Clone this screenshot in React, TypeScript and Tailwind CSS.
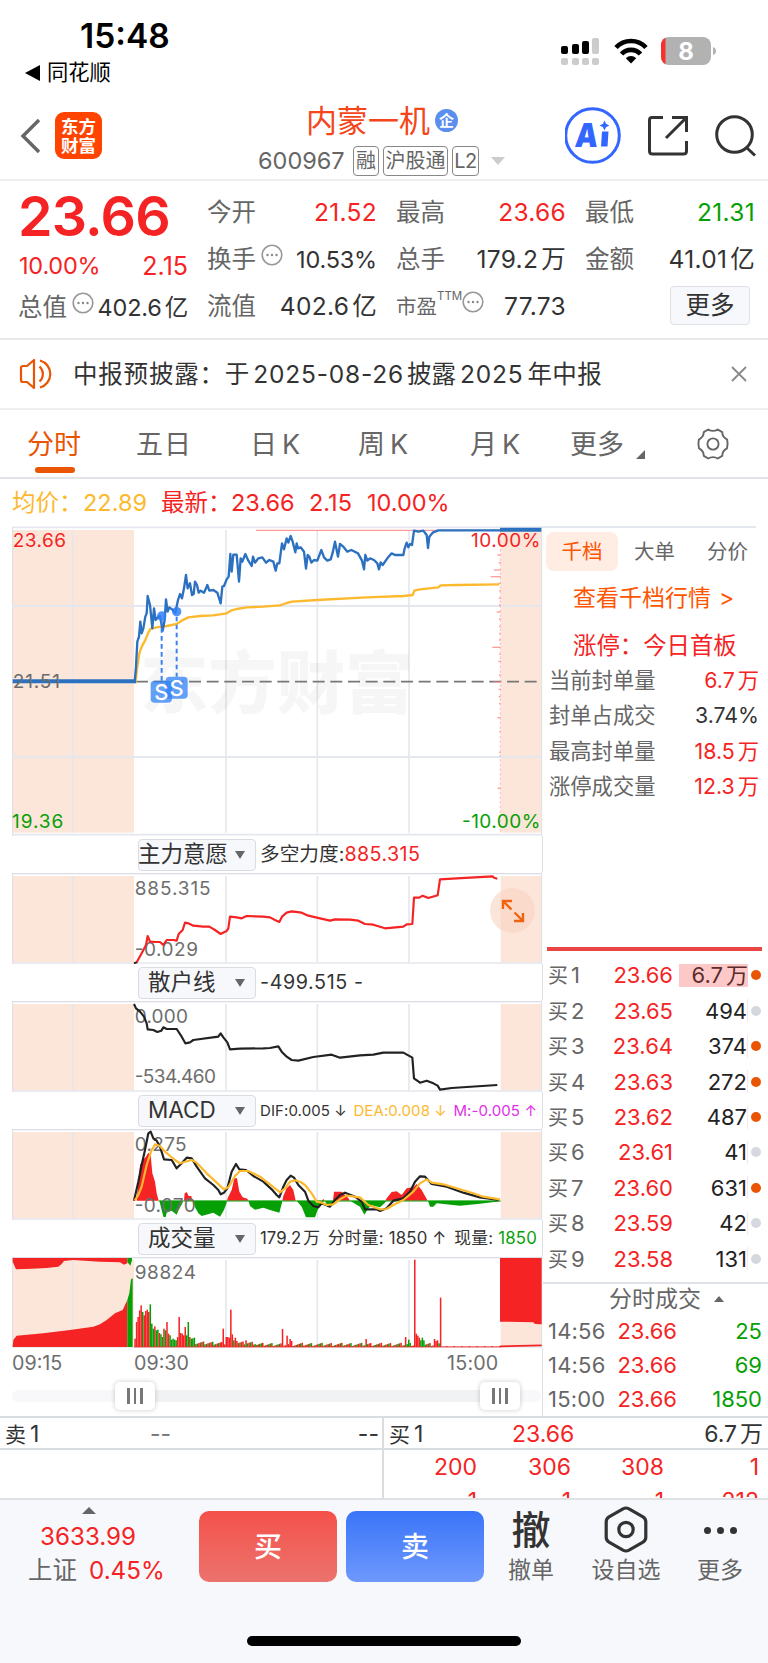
import type { ReactNode } from "react";

const RED = "#f52323";
const GREEN = "#06a006";
const PEACH = "#fce6da";
const GRID = "#e4e7ee";

type Bid = { level: number; price: string; qty: string; hot: boolean };

const bids: Bid[] = [
  { level: 1, price: "23.66", qty: "6.7万", hot: true },
  { level: 2, price: "23.65", qty: "494", hot: false },
  { level: 3, price: "23.64", qty: "374", hot: true },
  { level: 4, price: "23.63", qty: "272", hot: true },
  { level: 5, price: "23.62", qty: "487", hot: true },
  { level: 6, price: "23.61", qty: "41", hot: false },
  { level: 7, price: "23.60", qty: "631", hot: true },
  { level: 8, price: "23.59", qty: "42", hot: false },
  { level: 9, price: "23.58", qty: "131", hot: false },
];

const sealStats = [
  { label: "当前封单量", value: "6.7万", red: true },
  { label: "封单占成交", value: "3.74%", red: false },
  { label: "最高封单量", value: "18.5万", red: true },
  { label: "涨停成交量", value: "12.3万", red: true },
];

const trades = [
  { time: "14:56", price: "23.66", qty: "25" },
  { time: "14:56", price: "23.66", qty: "69" },
  { time: "15:00", price: "23.66", qty: "1850" },
];

// chart series, drawn in a 1629-unit wide space (3 units per pixel)
const pricePath =
  "404,488 408,440 412,365 417,350 421,305 425,340 430,325 436,290 440,280 443,228 450,255 457,325 462,265 467,300 474,292 480,288 488,332 494,300 498,238 503,275 508,262 516,268 526,278 534,240 540,222 546,235 552,205 558,165 563,205 570,190 576,225 581,222 585,185 591,195 596,218 602,212 612,218 618,205 622,195 628,212 640,210 652,218 662,250 667,200 672,198 680,178 686,170 691,102 695,155 700,104 710,104 717,185 722,115 727,125 736,102 745,122 755,138 759,110 765,128 775,115 787,112 798,128 808,120 820,125 827,152 832,130 838,130 846,70 852,88 860,55 865,68 872,48 878,65 886,97 890,70 894,85 902,82 912,95 918,146 923,105 928,110 934,128 942,120 952,122 964,90 972,112 982,122 992,118 998,98 1005,65 1014,110 1020,72 1030,80 1042,95 1054,90 1074,100 1086,122 1092,148 1096,105 1102,122 1110,115 1122,120 1132,130 1137,148 1142,127 1148,135 1162,115 1175,100 1185,105 1210,105 1214,85 1220,68 1225,82 1230,72 1236,75 1242,32 1255,35 1270,32 1280,45 1284,84 1288,50 1298,38 1315,31 1500,31";
const avgPath =
  "406,490 412,440 418,400 425,380 435,362 445,338 452,326 470,322 500,318 530,312 545,302 565,292 600,288 640,286 680,280 692,272 710,267 740,262 790,260 840,256 860,249 876,245 952,240 1100,232 1210,228 1238,225 1243,212 1260,208 1315,202 1322,196 1370,195 1498,193";
const powerPath =
  "410,397 425,370 438,345 443,318 450,335 465,336 480,336 490,345 500,330 520,330 530,332 536,312 548,300 555,278 565,280 580,287 610,290 628,290 645,300 662,312 672,307 680,303 685,295 690,260 710,262 725,265 740,258 790,260 810,262 825,270 838,276 846,260 860,248 875,244 905,248 925,257 960,265 990,272 1005,268 1050,269 1075,272 1095,282 1120,284 1155,295 1210,290 1220,283 1237,282 1242,203 1258,203 1268,197 1285,204 1313,196 1320,148 1370,145 1478,139 1482,143 1492,146";
const retailPath =
  "402,522 408,535 420,545 432,560 440,580 443,598 460,600 472,606 484,602 490,592 500,597 530,597 545,620 556,640 570,637 580,630 655,620 662,610 670,622 682,637 690,658 720,656 790,655 810,654 835,649 845,665 860,680 875,690 895,692 940,681 995,674 1020,683 1080,676 1120,674 1150,668 1210,668 1237,683 1242,745 1260,758 1280,752 1300,760 1313,767 1320,779 1355,774 1492,765";
const difPath =
  "402,272 415,215 425,165 435,120 445,70 452,65 460,85 470,92 480,110 492,148 515,150 530,175 545,160 560,143 575,145 590,170 615,205 640,225 655,240 662,253 672,248 682,235 695,185 708,162 718,178 738,180 760,198 790,215 815,238 830,255 838,262 850,230 860,210 872,197 882,203 895,225 915,245 925,272 940,288 955,292 965,280 990,290 1005,270 1020,255 1035,248 1065,260 1085,275 1095,298 1130,298 1140,303 1160,295 1180,272 1210,265 1230,245 1245,215 1260,199 1275,200 1295,222 1340,230 1390,248 1440,262 1496,270";
const deaPath =
  "404,272 415,255 425,230 440,165 455,120 465,103 480,108 495,125 525,150 540,160 575,150 590,158 620,190 650,218 672,238 685,232 705,198 720,183 745,183 780,200 810,223 840,247 855,235 870,215 885,211 902,216 915,225 935,250 950,275 965,278 980,285 1000,283 1020,268 1040,257 1080,262 1105,285 1140,298 1160,297 1180,285 1210,270 1240,245 1260,220 1280,208 1295,218 1330,223 1370,235 1420,250 1450,260 1500,268";
const macdUp = [
  "410,272 415,215 420,165 428,150 437,142 445,128 452,135 457,190 465,215 470,250 476,272",
  "552,272 554,250 560,246 566,258 574,258 576,272",
  "681,272 683,264 695,240 703,205 711,205 718,245 728,262 742,266 745,272",
  "847,272 850,258 860,235 870,225 880,240 887,272",
  "965,272 970,267 974,272",
  "999,272 1002,245 1025,245 1045,265 1050,272",
  "1156,272 1160,265 1175,246 1190,244 1205,255 1220,235 1240,232 1250,222 1265,240 1283,272",
];
const macdDown = [
  "478,272 485,300 490,320 497,322 500,308 515,302 530,314 536,300 548,278 548,272",
  "578,272 585,292 595,310 605,318 640,308 660,320 672,300 680,278 680,272",
  "745,272 750,288 765,299 790,293 810,300 838,308 846,278 846,272",
  "890,272 905,290 918,322 945,322 955,295 962,285 972,272",
  "975,272 982,288 996,288 999,272",
  "1050,272 1060,278 1080,290 1093,314 1105,295 1115,286 1140,292 1155,278 1158,272",
  "1284,272 1290,290 1300,290 1310,280 1380,287 1440,281 1500,274 1500,272",
];

// opening minutes of the volume histogram: height + direction
const openVolume =
  "25r 75r 90r 110r 125r 105g 95r 108r 112r 105r 128g 70g 55g 62r 50g 52g 42r 38g 30g 55r 50g 75r 40r 35g 22g 25g 22g 20g 30r 90r 42r 40r 35r 60r 35g 75g 30r 25g 26g 28g".split(" ");
const spikes: Record<number, string> = {
  58: "55r", 60: "30r", 61: "30r", 62: "28r", 63: "112r", 64: "38r", 65: "20g", 66: "28r", 67: "18r",
  73: "20r", 97: "54r", 100: "34r", 102: "24r", 103: "18r", 152: "24r", 178: "30r", 180: "22g", 184: "262r", 185: "40r",
  186: "34r", 187: "28r", 188: "20g", 189: "28g", 190: "20g", 197: "24r", 198: "18r", 199: "20r", 201: "148r",
};

const volumeBars = Array.from({ length: 241 }, (_, i) => {
  const known = openVolume[i] ?? spikes[i];
  if (known) return { h: parseInt(known), up: known.endsWith("r") };
  if (i > 201) return { h: 1 + (i % 5 === 0 ? 2 : 0), up: true };
  const noise = (i * 7919) % 13;
  const base = i < 80 ? 7 : 3;
  return { h: base + noise * 0.8, up: (i * 31) % 7 < 4 };
});

// a figure with its unit (万 / 亿) set slightly apart
function Num({ children }: { children: string }) {
  const unit = /[万亿]$/.test(children) ? children.slice(-1) : "";
  if (!unit) return <>{children}</>;
  return (
    <>
      {children.slice(0, -1)}
      <span className="ml-[3px]">{unit}</span>
    </>
  );
}

function ArrowDown({ className = "" }: { className?: string }) {
  return <span className={`inline-block border-x-[5px] border-t-[8px] border-x-transparent border-t-[#666] ${className}`} />;
}

function MoreDots() {
  return (
    <svg className="h-[22px] w-[22px] shrink-0" viewBox="0 0 22 22">
      <circle cx="11" cy="11" r="9.8" fill="none" stroke="#999" strokeWidth="1.6" />
      <circle cx="6.5" cy="11" r="1.2" fill="#888" />
      <circle cx="11" cy="11" r="1.2" fill="#888" />
      <circle cx="15.5" cy="11" r="1.2" fill="#888" />
    </svg>
  );
}

function StatusBar() {
  return (
    <div className="flex h-[92px] justify-between text-black">
      <div className="pt-[19px]">
        <div className="ml-[80px] text-[33.500px] leading-[34px] font-semibold">15:48</div>
        <div className="ml-[25px] mt-[8px] flex h-[24px] items-center text-[21.300px] leading-none">
          <span className="mr-[7px] border-y-[8px] border-r-[15px] border-y-transparent border-r-black" />
          同花顺
        </div>
      </div>
      <svg className="mr-[51px] mt-[36px] h-[30px] w-[157px]" viewBox="0 0 157 30">
        <rect x="1" y="10" width="7" height="8" rx="2" />
        <rect x="12" y="8" width="7" height="10" rx="2" />
        <rect x="22" y="5" width="7" height="13" rx="2" />
        <rect x="32" y="2" width="7" height="16" rx="2" fill="#ccc" />
        {[1, 12, 22, 32].map((x) => (
          <rect key={x} x={x} y="22" width="7" height="7" rx="2" fill="#ccc" />
        ))}
        <g fill="none" stroke="#000" strokeWidth="4.6">
          <path d="M56 11.5a20.500 20.500 0 0 1 30 0" />
          <path d="M61.500 18a13 13 0 0 1 19 0" />
        </g>
        <path d="M71 27.500 65.800 22.200a7.500 7.500 0 0 1 10.400 0z" />
        <clipPath id="battery">
          <rect x="101" y="1" width="50" height="28" rx="8" />
        </clipPath>
        <g clipPath="url(#battery)">
          <rect x="101" y="1" width="50" height="28" fill="#b2b2b2" />
          <rect x="101" y="1" width="4.500" height="28" fill="#f8302c" />
        </g>
        <path d="M153 11q3 1 3 4t-3 4z" fill="#b2b2b2" />
        <text x="126" y="23.500" textAnchor="middle" fontSize="24" fontWeight="700" fill="#fff">8</text>
      </svg>
    </div>
  );
}

function Header() {
  return (
    <div className="flex h-[89px] border-b-2 border-[#eee]">
      <div className="flex w-[258px] pt-[20px] pl-[20px]">
        <svg className="mt-[6px] h-[36px] w-[21px]" viewBox="0 0 21 36" fill="none" stroke="#666" strokeWidth="3.400">
          <path d="M19 2 3 18l16 16" />
        </svg>
        <div className="ml-[14px] flex h-[47px] w-[47px] flex-col items-center justify-center rounded-[9px] bg-[#ff4400] text-[17.500px] leading-[19px] font-bold text-white">
          <span>东方</span>
          <span>财富</span>
        </div>
      </div>
      <div className="w-[307px]">
        <div className="ml-[48px] mt-[12px] flex h-[32px] items-center">
          <span className="text-[31px] leading-none text-[#f4461a]">内蒙一机</span>
          <span className="ml-[5px] flex h-[23px] w-[23px] items-center justify-center rounded-full bg-[#5b8fee] text-[15px] leading-none font-bold text-white">
            企
          </span>
        </div>
        <div className="mt-[10px] flex h-[30px] items-center text-[#666]">
          <span className="w-[95px] text-[23.500px] leading-none">600967</span>
          <span className="flex h-[30px] w-[26px] items-center justify-center rounded-[4px] border-[1.500px] border-[#888] text-[20px] leading-none">融</span>
          <span className="ml-[4px] flex h-[30px] w-[65px] items-center justify-center rounded-[4px] border-[1.500px] border-[#888] text-[20px] leading-none">沪股通</span>
          <span className="ml-[4px] flex h-[30px] w-[27px] items-center justify-center rounded-[4px] border-[1.500px] border-[#888] text-[20px] leading-none tracking-tight">L2</span>
          <span className="ml-[12px] border-x-[7px] border-t-[8px] border-x-transparent border-t-[#ccc]" />
        </div>
      </div>
      <svg className="h-[80px] w-[203px]" viewBox="565 92 203 80" fill="none">
        <circle cx="592.500" cy="135.500" r="26.800" stroke="#3366ff" strokeWidth="3" />
        <text x="575" y="147" fontSize="33" fontWeight="900" fill="#3366ff" transform="skewX(-5) translate(12 0)" textLength="23" lengthAdjust="spacingAndGlyphs">A</text>
        <path d="M602 131.500h6.500l-1 15h-6.500z" fill="#3366ff" />
        <path d="M604.500 120.500l1.500 3.300 3.300 1.700-3.300 1.700-1.500 3.300-1.500-3.300-3.300-1.700 3.300-1.700z" fill="#3366ff" />
        <g stroke="#333" strokeWidth="3">
          <path d="M663 117.500h-11q-2.500 0-2.500 2.500v31q0 3 3 3h31q3 0 3-3V141" />
          <path d="M672 117.500h14.500V132M685.500 118.500 666 138" />
          <circle cx="734.500" cy="134.500" r="17.800" />
          <path d="M746.500 147.500 755 155.500" />
        </g>
      </svg>
    </div>
  );
}

function Cell({ label, value, color = "text-[#333]", dots }: { label: ReactNode; value: string; color?: string; dots?: boolean }) {
  const snug = value.endsWith("%") || (dots && value.endsWith("亿"));
  return (
    <div className="flex h-[47px] items-center justify-between leading-none">
      <span className="flex items-center text-[24.500px] text-[#666]">
        {label}
        {dots && (
          <span className="ml-[5px] -mt-[10px]">
            <MoreDots />
          </span>
        )}
      </span>
      <span className={`whitespace-nowrap ${snug ? "text-[23.500px] tracking-[-0.2px]" : "text-[24.500px] tracking-[0.3px]"} ${color}`}>
        <Num>{value}</Num>
      </span>
    </div>
  );
}

function Quote() {
  return (
    <div className="grid h-[159px] grid-cols-[170px_170px_170px_170px] gap-x-[19px] border-b-2 border-[#e9e9e9] pt-[8px] pl-[18px] leading-none">
      <div className="text-[#f52323]">
        <div className="flex h-[54px] items-center text-[55.500px] font-semibold tracking-[-0.8px]">23.66</div>
        <div className="flex h-[46px] items-center justify-between pl-[1px] text-[23.500px]">
          <span className="tracking-[-0.2px]">10.00%</span>
          <span className="text-[25px]">2.15</span>
        </div>
        <div className="-mt-[5px]">
          <Cell label="总值" value="402.6亿" dots />
        </div>
      </div>
      <div>
        <Cell label="今开" value="21.52" color="text-[#f52323]" />
        <Cell label="换手" value="10.53%" dots />
        <Cell label="流值" value="402.6亿" />
      </div>
      <div>
        <Cell label="最高" value="23.66" color="text-[#f52323]" />
        <Cell label="总手" value="179.2万" />
        <Cell
          label={
            <span className="flex items-center pt-[2px] text-[20.500px]">
              市盈<span className="-mt-[22px] text-[11.500px]">TTM</span>
              <span className="-mt-[12px]">
                <MoreDots />
              </span>
            </span>
          }
          value="77.73"
        />
      </div>
      <div>
        <Cell label="最低" value="21.31" color="text-[#06a006]" />
        <Cell label="金额" value="41.01亿" />
        <div className="mt-[3px] mr-[5px] ml-auto flex h-[39px] w-[80px] items-center justify-center rounded-[4px] border-[1.500px] border-[#dfe1e8] bg-[#f7f8fb] text-[24.500px] text-[#333]">
          更多
        </div>
      </div>
    </div>
  );
}

function Notice() {
  return (
    <div className="flex h-[70px] items-center border-b-2 border-[#eee] pl-[19px] text-[24.500px] leading-none text-[#333]">
      <svg className="h-[32px] w-[35px]" viewBox="0 0 35 32" fill="none" stroke="#ea5504" strokeWidth="2.200">
        <path d="M2 10q0-2 2-2h4l7-6v28l-7-6H4q-2 0-2-2z" strokeLinejoin="round" />
        <path d="M20.500 8.500a10 10 0 0 1 0 15M21 2.500a14 14 0 0 1 0 27" />
      </svg>
      <span className="ml-[19px] tracking-[0.8px]">中报预披露：</span>
      <span>于</span>
      <span className="ml-[4px] tracking-[0.8px]">2025-08-26</span>
      <span className="ml-[3px]">披露</span>
      <span className="ml-[4px] tracking-[0.8px]">2025</span>
      <span className="ml-[4px] tracking-[0.400px]">年中报</span>
      <svg className="mr-[21px] ml-auto h-[16px] w-[16px]" viewBox="0 0 16 16" stroke="#888" strokeWidth="1.800">
        <path d="M1 1l14 14M15 1 1 15" />
      </svg>
    </div>
  );
}

function PeriodTabs() {
  return (
    <div className="flex h-[69px] border-b-2 border-[#e2e3e9] pt-[20px] pl-[27px] text-[27px] leading-[30px] text-[#666]">
      <div className="w-[109px] text-[#ea5504]">
        分时
        <div className="mt-[7px] ml-[8px] h-[6px] w-[40px] rounded-[3px] bg-[#ea5504]" />
      </div>
      <div className="w-[114px] tracking-[1px]">五日</div>
      <div className="w-[108px]">日<span className="ml-[5px]">K</span></div>
      <div className="w-[112px]">周<span className="ml-[5px]">K</span></div>
      <div className="w-[100px]">月<span className="ml-[5px]">K</span></div>
      <div className="flex w-[126px]">
        更多
        <span className="mt-[20px] ml-[12px] h-0 w-0 border-b-[9px] border-l-[9px] border-b-[#666] border-l-transparent" />
      </div>
      <svg className="-mt-[2px] h-[32px] w-[34px]" viewBox="0 0 34 32" fill="none" stroke="#666" strokeWidth="1.900">
        <path d="M12.200 1.500q4.800 2.800 9.600 0l4.400 2.600q.1 5 5 7.600.9 4.300-.2 8.600-4.800 2.600-4.800 7.600l-4.400 2.600q-4.800-2.800-9.600 0l-4.400-2.600q0-5-4.800-7.600-1.100-4.300-.2-8.600 4.900-2.600 5-7.600z" strokeLinejoin="round" />
        <circle cx="17" cy="16" r="5.600" />
      </svg>
    </div>
  );
}

function PriceSummary() {
  return (
    <div className="flex h-[47px] items-center pt-[1px] pl-[12px] text-[23.500px] leading-none text-[#f52323]">
      <span className="w-[71px] shrink-0 whitespace-nowrap text-[#fdb92e]">均价：</span>
      <span className="w-[78px] text-[#fdb92e]">22.89</span>
      <span className="w-[70px] shrink-0 whitespace-nowrap">最新：</span>
      <span className="w-[78px]">23.66</span>
      <span className="w-[58px]">2.15</span>
      <span>10.00%</span>
    </div>
  );
}

function Columns({ top, height }: { top: number; height: number }) {
  return (
    <>
      <rect x="36" y={top} width="366" height={height} fill={PEACH} />
      <rect x="1502" y={top} width="122" height={height} fill={PEACH} />
      {[218, 678, 952, 1227].map((x) => (
        <path key={x} d={`M${x} ${top}v${height}`} stroke={GRID} strokeWidth="5" />
      ))}
    </>
  );
}

function Label({ x, y, w, fill = "#6e6e6e", children }: { x: number; y: number; w: number; fill?: string; children: string }) {
  return (
    <text x={x} y={y} fontSize="57" fill={fill} textLength={w}>
      {children}
    </text>
  );
}

function PriceChart() {
  const ticks = [
    [105, 10], [128, 6], [150, 20], [170, 30], [190, 6], [212, 5], [235, 6], [255, 5], [276, 12], [297, 5],
    [320, 5], [340, 5], [360, 5], [382, 25], [403, 5], [424, 7], [465, 5], [487, 20], [508, 6], [530, 6],
    [551, 5], [593, 10], [634, 4], [697, 5], [805, 9],
  ];
  return (
    <svg className="block h-[310px] w-[543px]" viewBox="0 18 1629 930">
      <Columns top={30} height={908} />
      <path d="M36 22H1629M36 944H1624" stroke={GRID} strokeWidth="5" />
      <path d="M38 20V948M1625 20V948" stroke="#dcdfe6" strokeWidth="3" />
      <text x="420" y="563" fontSize="205" fontWeight="900" fill="#000" fillOpacity="0.035" textLength="820">东方财富</text>
      <path d="M36 258H1624M36 711H1624" stroke={GRID} strokeWidth="6" />
      <path d="M408 485H1618" stroke="#777" strokeWidth="5" strokeDasharray="36 17" />
      <path d="M768 31H1500" stroke="#ff8080" strokeWidth="3" />
      <path d="M1501 31V940" stroke="#ff9c9c" strokeWidth="2" strokeDasharray="8 6" />
      {ticks.map(([y, len]) => (
        <path key={y} d={`M${1502 - len} ${y}h${len}`} stroke="#ff9c9c" strokeWidth="4" />
      ))}
      <g fill="none" strokeLinejoin="round">
        <polyline points={avgPath} stroke="#fdb92e" strokeWidth="7" />
        <polyline points={pricePath} stroke="#2c70c0" strokeWidth="7" />
        <path d="M38 484H408" stroke="#2c70c0" strokeWidth="12" />
        <path d="M1500 29.500H1624" stroke="#2c70c0" strokeWidth="12" />
        <path d="M485 300V482M530 290V470" stroke="#3b82f0" strokeWidth="6" strokeDasharray="14 10" />
      </g>
      <g fill="#2f80f7" fillOpacity="0.85">
        <circle cx="485" cy="288" r="14" />
        <circle cx="530" cy="275" r="14" />
        <rect x="452" y="482" width="64" height="66" rx="12" fillOpacity="0.75" />
        <rect x="497" y="470" width="66" height="66" rx="12" fillOpacity="0.75" />
      </g>
      <g fill="#fff" fontSize="66" fontWeight="500" textAnchor="middle">
        <text x="484" y="540">S</text>
        <text x="530" y="527">S</text>
      </g>
      <Label x={38} y={81} w={160} fill={RED}>23.66</Label>
      <Label x={38} y={503} w={142} fill="#6b6b6b">21.51</Label>
      <Label x={36} y={924} w={154} fill={GREEN}>19.36</Label>
      <Label x={1413} y={81} w={208} fill={RED}>10.00%</Label>
      <Label x={1386} y={924} w={235} fill={GREEN}>-10.00%</Label>
    </svg>
  );
}

function IndicatorHead({ name, wide, children }: { name: string; wide?: boolean; children: ReactNode }) {
  return (
    <div className="flex h-[36px] items-center border-r border-[#dcdfe6] pt-[1px] pl-[138px] leading-none text-[#333]">
      <div className={`mr-[4px] flex h-[32px] w-[118px] shrink-0 items-center justify-between rounded-[4px] border border-[#d9dce2] bg-[#f7f8fb] pr-[10px] ${wide ? "pl-0" : "pl-[9px]"}`}>
        <span className={`text-[22.500px] whitespace-nowrap ${wide ? "-ml-[1px]" : ""}`}>{name}</span>
        <ArrowDown />
      </div>
      {children}
    </div>
  );
}

function Frame({ viewBox, top, children }: { viewBox: string; top: number; children: ReactNode }) {
  return (
    <svg className="block h-[92px] w-[543px]" viewBox={viewBox}>
      <Columns top={top + 12} height={260} />
      <path d={`M36 ${top + 5}H1624`} stroke="#d9dce3" strokeWidth="4" />
      <path d={`M36 ${top + 273}H1624`} stroke={GRID} strokeWidth="4" />
      <path d={`M38 ${top + 4}v270M1625 ${top}v276`} stroke="#dcdfe6" strokeWidth="3" />
      {children}
    </svg>
  );
}

function Indicators() {
  return (
    <>
      <IndicatorHead name="主力意愿" wide>
        <span className="text-[19.700px] whitespace-nowrap">多空力度:<span className="tracking-[0.4px] text-[#f52323]">885.315</span></span>
      </IndicatorHead>
      <div className="relative">
        <Frame viewBox="0 126 1629 276" top={126}>
          <Label x={404} y={196} w={228}>885.315</Label>
          <Label x={404} y={379} w={190}>-0.029</Label>
          <path d="M402 400 412 396" stroke="#222" strokeWidth="6" />
          <polyline points={powerPath} fill="none" stroke={RED} strokeWidth="6.500" strokeLinejoin="round" />
        </Frame>
        <div className="absolute top-[16px] left-[490px] flex h-[45px] w-[45px] items-center justify-center rounded-full bg-[#f9d6c3]/65">
          <svg className="h-[24px] w-[24px]" viewBox="0 0 24 24" fill="none" stroke="#f26310" strokeWidth="2.400">
            <path d="M2 10V2h9M2.500 2.500l8 8M22 14v8h-9M21.500 21.500l-8-8" />
          </svg>
        </div>
      </div>

      <IndicatorHead name="散户线">
        <span className="text-[19.700px] tracking-[0.6px]">-499.515 -</span>
      </IndicatorHead>
      <Frame viewBox="0 510 1629 276" top={510}>
        <Label x={404} y={579} w={160}>0.000</Label>
        <Label x={404} y={758} w={244}>-534.460</Label>
        <polyline points={retailPath} fill="none" stroke="#222" strokeWidth="6.500" strokeLinejoin="round" />
      </Frame>

      <IndicatorHead name="MACD">
        <span className="flex w-[277px] justify-between text-[15px] tracking-[0.1px] whitespace-nowrap">
          <span>DIF:0.005 ↓</span>
          <span className="text-[#fdb92e]">DEA:0.008 ↓</span>
          <span className="text-[#e030e8]">M:-0.005 ↑</span>
        </span>
      </IndicatorHead>
      <Frame viewBox="0 54 1629 276" top={54}>
        {macdDown.map((p) => (
          <polygon key={p} points={p} fill={GREEN} />
        ))}
        {macdUp.map((p) => (
          <polygon key={p} points={p} fill={RED} />
        ))}
        <path d="M476 273H1502" stroke={GREEN} strokeWidth="3" />
        <Label x={404} y={123} w={156}>0.275</Label>
        <Label x={404} y={306} w={183}>-0.070</Label>
        <g fill="none" strokeWidth="6.500" strokeLinejoin="round">
          <polyline points={difPath} stroke="#222" />
          <polyline points={deaPath} stroke="#fdb92e" />
        </g>
      </Frame>

      <IndicatorHead name="成交量">
        <span className="flex w-[277px] justify-between text-[16.800px] whitespace-nowrap">
          <span>179.2<span className="ml-[2px]">万</span></span>
          <span className="tracking-[0.2px]">分时量: 1850 ↑</span>
          <span className="tracking-[0.2px]">现量: <span className="text-[#06a006]">1850</span></span>
        </span>
      </IndicatorHead>
      <Frame viewBox="0 438 1629 276" top={438}>
        <polygon points="38,444 38,455 48,478 95,476 140,474 175,470 185,462 192,453 220,450 300,455 360,457 372,464 382,460 382,444" fill={RED} />
        <polygon points="382,444 382,456 391,467 396,450 396,444" fill={GREEN} />
        <polygon points="38,711 40,690 50,677 130,670 210,660 280,650 300,643 320,630 345,610 368,600 382,570 382,711" fill={RED} />
        <polygon points="382,711 382,570 388,550 393,508 398,505 398,711" fill={GREEN} />
        <polygon points="1500,444 1625,444 1625,643 1605,642 1600,637 1500,635" fill={RED} />
        <path d="M1500 709 1625 706" stroke={RED} strokeWidth="5" />
        {volumeBars.map((b, i) => (
          <rect key={i} x={403 + i * 4.56} y={711 - b.h} width="4.560" height={b.h} fill={b.up ? RED : GREEN} />
        ))}
        <path d="M402 711H1502" stroke={RED} strokeWidth="2" />
        <Label x={404} y={507} w={184}>98824</Label>
      </Frame>
    </>
  );
}

function Handle({ className }: { className: string }) {
  return (
    <div className={`absolute top-0 flex h-[28px] w-[40px] items-center justify-center gap-[4px] rounded-[5px] bg-white shadow-[0_0_5px_rgba(0,0,0,0.22)] ${className}`}>
      <span className="h-[16px] w-[2.500px] bg-[#777]" />
      <span className="h-[16px] w-[2.500px] bg-[#777]" />
      <span className="h-[16px] w-[2.500px] bg-[#777]" />
    </div>
  );
}

function TimeAxis() {
  return (
    <div className="h-[68px] border-r border-[#dcdfe6] pt-[5px] text-[19.700px] leading-[20px] text-[#6e6e6e]">
      <div className="flex">
        <span className="ml-[12px] w-[122px]">09:15</span>
        <span className="w-[313px]">09:30</span>
        <span className="tracking-[0.2px]">15:00</span>
      </div>
      <div className="relative mt-[9px] h-[28px]">
        <div className="absolute top-[8px] left-[12px] h-[12px] w-[529px] rounded-full bg-[#f8f8fa]" />
        <div className="absolute top-[8px] left-[135px] h-[12px] w-[365px] bg-[#f1f2f4]" />
        <Handle className="left-[115px]" />
        <Handle className="left-[480px]" />
      </div>
    </div>
  );
}

function OrderBook() {
  return (
    <div className="w-[225px] leading-none">
      <div className="h-[2px] w-[213px] bg-[#e4e7ee]" />
      <div className="mt-[4px] ml-[3px] flex h-[39px] items-center text-[20.500px] text-[#666]">
        <span className="flex h-[39px] w-[72px] items-center justify-center rounded-[8px] bg-[#ffece3] pt-[1px] text-[#ff5500]">千档</span>
        <span className="ml-[16px] pt-[1px]">大单</span>
        <span className="ml-[32px] pt-[1px]">分价</span>
      </div>
      <div className="mt-[15px] ml-[30px] flex h-[24px] items-center text-[23px] whitespace-nowrap text-[#ff5500]">
        查看千档行情<span className="ml-[8px]">&gt;</span>
      </div>
      <div className="mt-[24px] ml-[30px] flex h-[24px] items-center text-[23.400px] whitespace-nowrap text-[#f52323]">涨停：今日首板</div>
      <div className="mt-[5px] mb-[142px]">
        {sealStats.map((s) => (
          <div key={s.label} className="flex h-[35.400px] items-center justify-between pr-[9px] pl-[6px] text-[21.300px] text-[#666]">
            <span>{s.label}</span>
            <span className={s.red ? "text-[#f52323]" : "text-[#333]"}><Num>{s.value}</Num></span>
          </div>
        ))}
      </div>
      <div className="ml-[4px] h-[4px] w-[215px] bg-[#ea4545]" />
      <div className="mt-[7px]">
        {bids.map((b) => (
          <div key={b.level} className="flex h-[35.450px] items-center pl-[5px] text-[22px]">
            <span className="w-[46px] text-[#666]">
              <span className="text-[20px]">买</span>
              <span className="ml-[3px]">{b.level}</span>
            </span>
            <span className="w-[79px] text-right text-[#f52323]">{b.price}</span>
            <span className={`ml-[6px] flex h-[23px] w-[69px] items-center justify-end ${b.level === 1 ? "bg-[#fdc8c8] text-[#5c2b2b]" : "border-r border-[#fde3e3] text-[#222]"}`}>
              <Num>{b.qty}</Num>
            </span>
            <span className={`ml-[3px] h-[10px] w-[10px] rounded-full ${b.hot ? "bg-[#ea5504]" : "bg-[#d5d8de]"}`} />
          </div>
        ))}
      </div>
      <div className="mt-[5px] flex h-[33px] items-center border-t-2 border-[#e0e2e9] pl-[66px] text-[23px] text-[#666]">
        分时成交
        <span className="ml-[13px] border-x-[5px] border-b-[6px] border-x-transparent border-b-[#666]" />
      </div>
      <div className="-mt-[1px]">
        {trades.map((t, i) => (
          <div key={i} className="flex h-[34.200px] items-center pl-[5px] text-[22px]">
            <span className="w-[60px] tracking-[0.2px] text-[#666]">{t.time}</span>
            <span className="w-[69px] text-right text-[#f52323]">{t.price}</span>
            <span className="w-[85px] text-right text-[#06a006]">{t.qty}</span>
          </div>
        ))}
      </div>
    </div>
  );
}

function Depth() {
  const rows = [
    ["200", "306", "308", "1"],
    ["1", "1", "1", "212"],
  ];
  return (
    <div className="h-[82px] overflow-hidden border-t-2 border-[#d9dce1] text-[23px] leading-none text-[#333]">
      <div className="flex">
        <div className="flex h-[32px] w-[382px] items-center border-b-2 border-[#d9dce1] pt-[2px] pr-[3px] pl-[5px]">
          <span className="w-[145px]"><span className="mr-[4px] text-[21px]">卖</span>1</span>
          <span className="text-[#777]">--</span>
          <span className="ml-auto">--</span>
        </div>
        <div className="h-[82px] flex-1 border-l-2 border-[#d9dce1]">
          <div className="flex h-[32px] items-center border-b-2 border-[#d9dce1] pt-[2px] pr-[5px] pl-[5px]">
            <span className="w-[123px]"><span className="mr-[4px] text-[21px]">买</span>1</span>
            <span className="text-[#f52323]">23.66</span>
            <span className="ml-auto"><Num>6.7万</Num></span>
          </div>
          {rows.map((row, i) => (
            <div key={i} className="grid h-[34.500px] grid-cols-[93px_94px_93px_95px] items-center text-right text-[#f52323]">
              {row.map((v, j) => (
                <span key={j}>{v}</span>
              ))}
            </div>
          ))}
        </div>
      </div>
    </div>
  );
}

function Footer() {
  return (
    <div className="h-[165px] border-t-2 border-[#e0e1e5] bg-[#f7f8fb] leading-none">
      <div className="flex h-[136px]">
        <div className="flex w-[199px] flex-col text-[24.200px] whitespace-nowrap text-[#f52323]">
          <span className="mt-[7px] ml-[82px] h-0 w-0 border-x-[7px] border-b-[7px] border-x-transparent border-b-[#666]" />
          <span className="mt-[11px] ml-[40px]">3633.99</span>
          <span className="mt-[9px] ml-[28px]"><span className="mr-[12px] text-[24.500px] text-[#666]">上证</span>0.45%</span>
        </div>
        <button type="button" className="mt-[11px] h-[71px] w-[138px] rounded-[10px] bg-linear-to-b from-[#f4504a] to-[#ec726d] text-[28px] font-medium text-white">买</button>
        <button type="button" className="mt-[11px] ml-[9px] h-[71px] w-[138px] rounded-[10px] bg-linear-to-b from-[#3a74f8] to-[#6e98fd] text-[28px] font-medium text-white">卖</button>
        <div className="ml-[15px] flex w-[64px] flex-col items-center text-[23px] text-[#666]">
          <span className="mt-[10px] text-[39px] font-medium text-[#333]">撤</span>
          <span className="mt-[10px]">撤单</span>
        </div>
        <div className="ml-[22px] flex w-[82px] flex-col items-center text-[23px] text-[#666]">
          <svg className="mt-[6px] h-[47px] w-[44px]" viewBox="0 0 44 47" fill="none" stroke="#333" strokeWidth="3.200">
            <path d="M19 2.800q3-1.600 6 0l14 8q2.800 1.800 2.800 5v15.400q0 3.200-2.800 5l-14 8q-3 1.600-6 0l-14-8q-2.800-1.800-2.800-5V15.800q0-3.200 2.800-5z" />
            <circle cx="22" cy="23.500" r="7.200" />
          </svg>
          <span className="mt-[6px]">设自选</span>
        </div>
        <div className="ml-[25px] flex w-[56px] flex-col items-center text-[23px] text-[#666]">
          <span className="mt-[27px] flex gap-[6px]">
            <i className="h-[7px] w-[7px] rounded-full bg-[#333]" />
            <i className="h-[7px] w-[7px] rounded-full bg-[#333]" />
            <i className="h-[7px] w-[7px] rounded-full bg-[#333]" />
          </span>
          <span className="mt-[25px]">更多</span>
        </div>
      </div>
      <div className="mx-auto h-[10px] w-[274px] rounded-full bg-black" />
    </div>
  );
}

export default function App() {
  return (
    <div className="h-[1663px] w-[768px] overflow-hidden bg-white font-['Inter','Noto_Sans_CJK_SC',sans-serif]">
      <StatusBar />
      <Header />
      <Quote />
      <Notice />
      <PeriodTabs />
      <PriceSummary />
      <div className="flex h-[890px]">
        <div className="w-[543px]">
          <PriceChart />
          <Indicators />
          <TimeAxis />
        </div>
        <OrderBook />
      </div>
      <Depth />
      <Footer />
    </div>
  );
}
